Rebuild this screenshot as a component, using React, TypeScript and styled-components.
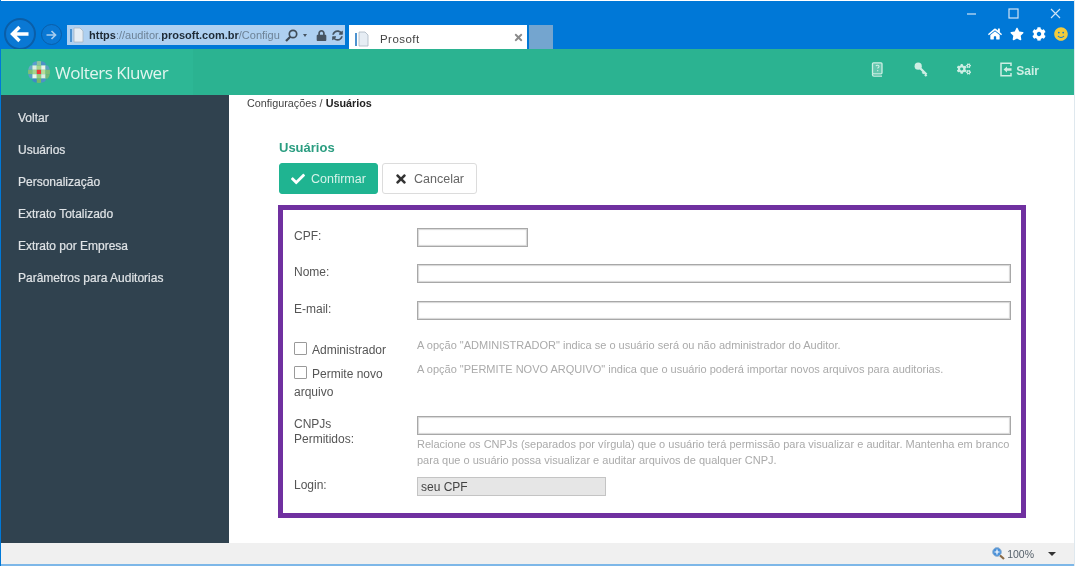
import * as React from 'react';
import styled, {createGlobalStyle} from 'styled-components';
import {
    FaCheck,
    FaCog,
    FaCogs,
    FaHome,
    FaLock,
    FaSmile,
    FaStar,
    FaSyncAlt,
    FaTimes,
} from 'react-icons/fa';

const GlobalStyle = createGlobalStyle`
    html, body {
        margin: 0;
        padding: 0;
        background: #fff;
        font-family: "Liberation Sans", Arial, sans-serif;
        overflow: hidden;
    }
`;

const Window = styled.div`
    width: 1075px;
    height: 566px;
    display: flex;
    flex-direction: column;
    box-sizing: border-box;
    padding-top: 1px;
    border-left: 1px solid #0078d7;
    border-right: 1px solid #dfe8ee;
    background: #fff;
    filter: blur(0.35px);
`;

const BrowserBar = styled.div`
    height: 48px;
    flex: none;
    background: #0078d7;
    display: flex;
    justify-content: space-between;
    padding-left: 3px;
    padding-right: 13px;
`;

const NavGroup = styled.div`
    display: flex;
    align-items: flex-start;
    padding-top: 17px;
`;

const BackButton = styled.div`
    width: 32px;
    height: 32px;
    box-sizing: border-box;
    border-radius: 50%;
    background: #0a78d4;
    border: 2px solid #0a5ea8;
    display: flex;
    align-items: center;
    justify-content: center;
`;

const ForwardButton = styled.div`
    width: 21px;
    height: 21px;
    box-sizing: border-box;
    margin: 6px 0 0 5px;
    border-radius: 50%;
    border: 1px solid #0a5ea8;
    background: #0a78d4;
    display: flex;
    align-items: center;
    justify-content: center;
`;

const AddressBar = styled.div`
    width: 278px;
    height: 20px;
    margin: 7px 0 0 5px;
    background: #aed0f1;
    box-sizing: border-box;
    display: flex;
    align-items: center;
    padding: 0 5px 0 3px;
    font-size: 11px;
    color: #6d8296;
    white-space: nowrap;
`;

const PageGlyph = styled.svg`
    width: 14px;
    height: 16px;
    flex: none;
    margin-right: 5px;
`;

const UrlText = styled.span`
    width: 191px;
    flex: none;
`;

const UrlStrong = styled.b`
    color: #1e2a35;
    font-weight: 700;
`;

const AddressIcons = styled.div`
    display: flex;
    align-items: center;
    margin-left: 5px;
    color: #465462;
    font-size: 11px;
`;

const LensIcon = styled.svg`
    width: 13px;
    height: 13px;
    fill: none;
    stroke: #3f4c58;
    stroke-width: 1.7;
`;

const TinyCaret = styled.span`
    width: 0;
    height: 0;
    margin: 0 9px 0 5px;
    border-left: 2.5px solid transparent;
    border-right: 2.5px solid transparent;
    border-top: 3px solid #465462;
`;

const ReloadWrap = styled.span`
    display: flex;
    margin-left: 5px;
`;

const Tab = styled.div`
    width: 178px;
    height: 24px;
    margin: 7px 0 0 4px;
    background: #fff;
    box-sizing: border-box;
    display: flex;
    align-items: center;
    padding: 3px 3px 0 6px;
    font-size: 11.5px;
    letter-spacing: 0.45px;
    color: #444;
`;

const TabTitle = styled.span`
    flex: 1;
    margin-left: 6px;
`;

const TabClose = styled.span`
    color: #8a8a8a;
    font-size: 11px;
    display: flex;
    margin-top: -3px;
`;

const NewTab = styled.div`
    width: 24px;
    height: 24px;
    margin: 7px 0 0 2px;
    background: #74a5cf;
`;

const RightGroup = styled.div`
    display: flex;
    flex-direction: column;
    align-items: flex-end;
`;

const WindowControls = styled.div`
    display: flex;
    align-items: center;
    gap: 31px;
    height: 24px;
`;

const ControlGlyph = styled.svg`
    width: 11px;
    height: 11px;
    stroke: #cfe3f6;
    stroke-width: 1.2;
    fill: none;
`;

const ToolIcons = styled.div`
    display: flex;
    align-items: center;
    gap: 8px;
    color: #fff;
    font-size: 14px;
    margin-right: -7px;
    margin-top: 2px;
`;

const SmileIcon = styled(FaSmile)`
    color: #f3cb3c;
`;

const AppHeader = styled.header`
    height: 46px;
    flex: none;
    background: #2bb391;
    display: flex;
    justify-content: space-between;
    align-items: center;
`;

const Brand = styled.div`
    width: 192px;
    height: 100%;
    background: #2db795;
    box-sizing: border-box;
    padding-left: 27px;
    display: flex;
    align-items: center;
    gap: 5px;
`;

const BrandName = styled.span`
    font-family: "Open Sans", sans-serif;
    font-size: 17px;
    letter-spacing: -0.5px;
    color: #e2f5ef;
`;

const HeaderNav = styled.nav`
    display: flex;
    align-items: flex-start;
    color: #cdeee4;
    padding: 0 35px 4px 0;
`;

const HeaderItem = styled.span<{$gap: number}>`
    display: flex;
    align-items: flex-start;
    gap: 4px;
    font-size: 14px;
    font-weight: 700;
    margin-left: ${p => p.$gap}px;
`;

const SairLabel = styled.span`
    font-size: 12px;
    line-height: 14px;
    margin-top: 2px;
`;

const HeaderGlyph = styled.svg<{$width: number}>`
    width: ${p => p.$width}px;
    height: 15px;
    fill: none;
    stroke: currentColor;
`;

const Body = styled.div`
    flex: 1;
    display: flex;
    min-height: 0;
`;

const Sidebar = styled.aside`
    width: 228px;
    flex: none;
    background: #30424f;
    padding-top: 7px;
    box-sizing: border-box;
`;

const SideLink = styled.div`
    height: 32px;
    line-height: 32px;
    padding-left: 17px;
    font-size: 12px;
    color: #dfe3e6;
    -webkit-text-stroke: 0.2px #dfe3e6;
`;

const Content = styled.main`
    flex: 1;
    padding: 2px 0 0 18px;
    min-width: 0;
`;

const Breadcrumb = styled.div`
    font-size: 10.8px;
    line-height: 13px;
    color: #444;
`;

const BreadcrumbCurrent = styled.b`
    color: #222;
`;

const Inner = styled.div`
    margin: 30px 0 0 31px;
    width: 748px;
`;

const Title = styled.h2`
    margin: 0 0 0 1px;
    font-size: 13px;
    line-height: 16px;
    font-weight: 700;
    color: #2a9d80;
`;

const Toolbar = styled.div`
    display: flex;
    gap: 4px;
    margin: 7px 0 0 1px;
`;

const Button = styled.button<{$primary?: boolean; $width: number}>`
    width: ${p => p.$width}px;
    height: 31px;
    box-sizing: border-box;
    border-radius: 3px;
    display: flex;
    align-items: center;
    gap: 6px;
    padding: 0 0 0 11px;
    font-family: "Liberation Sans", Arial, sans-serif;
    font-size: 12.5px;
    background: ${p => (p.$primary ? '#1fb491' : '#fff')};
    border: 1px solid ${p => (p.$primary ? '#1fb491' : '#dcdcdc')};
    color: ${p => (p.$primary ? '#d6f3ea' : '#666')};
`;

const BoldIcon = styled.span<{$primary?: boolean}>`
    display: flex;
    font-size: 14px;
    color: ${p => (p.$primary ? '#fff' : '#333')};
`;

const FormFrame = styled.form`
    margin-top: 11px;
    height: 313px;
    box-sizing: border-box;
    border: 5px solid #7030a0;
    padding: 18px 10px 0 11px;
    display: grid;
    grid-template-columns: 123px 1fr;
    grid-auto-rows: min-content;
    font-size: 12px;
    color: #555;
`;

const FieldLabel = styled.label<{$height: number}>`
    height: ${p => p.$height}px;
    line-height: 15px;
    padding-top: 1px;
    box-sizing: border-box;
`;

const FieldCell = styled.div<{$height: number}>`
    height: ${p => p.$height}px;
`;

const TextBox = styled.input<{$width?: number}>`
    display: block;
    box-sizing: border-box;
    width: ${p => (p.$width ? `${p.$width}px` : '100%')};
    height: 19px;
    padding: 0 3px;
    margin: 0;
    border: 1px solid #a8a8a8;
    box-shadow: inset 0 0 1px 1px #d6d6d6;
    background: #fff;
    font-family: "Liberation Sans", Arial, sans-serif;
    font-size: 12px;
    color: #444;

    &:disabled {
        background: #e6e6e6;
        border-color: #c4c4c4;
        box-shadow: none;
        opacity: 1;
        color: #444;
    }
`;

const CheckLabel = styled.div<{$height: number}>`
    height: ${p => p.$height}px;
    line-height: 18px;
    font-size: 12px;
    color: #555;
`;

const CheckBox = styled.span`
    display: inline-block;
    width: 11px;
    height: 11px;
    border: 1px solid #9a9a9a;
    border-radius: 1px;
    margin-right: 5px;
    vertical-align: -1px;
`;

const HelpLine = styled.div`
    margin-top: -4px;
    line-height: 16px;
    font-size: 11px;
    color: #aaa;
`;

const HelpBlock = styled.div`
    margin-top: 1px;
    font-size: 11px;
    line-height: 16px;
    color: #aaa;
`;

const StatusBar = styled.footer`
    height: 21px;
    flex: none;
    background: #f0f0f0;
    border-bottom: 2px solid #7db7e8;
    display: flex;
    justify-content: flex-end;
    align-items: center;
    gap: 14px;
    padding-right: 18px;
    font-size: 10.5px;
    color: #55606a;
`;

const Zoom = styled.span`
    display: flex;
    align-items: center;
    gap: 2px;
`;

const DownCaret = styled.span`
    width: 0;
    height: 0;
    border-left: 4px solid transparent;
    border-right: 4px solid transparent;
    border-top: 4px solid #333;
`;

const globeCells: [number, number, string][] = [
    [4, 0, '#5b9bd0'], [8, 0, '#8fc4a0'], [12, 0, '#4f90c8'],
    [0, 4, '#6aa8c8'], [4, 4, '#dfeee0'], [8, 4, '#a8d48c'], [12, 4, '#eef5ea'], [16, 4, '#5f9fc0'],
    [0, 8, '#7fbf78'], [4, 8, '#a8d48c'], [8, 8, '#ee3a3a'], [12, 8, '#b8dc98'], [16, 8, '#7fbf78'],
    [0, 12, '#5b9bc8'], [4, 12, '#eef5ea'], [8, 12, '#98cc80'], [12, 12, '#dfeee0'], [16, 12, '#78b878'],
    [4, 16, '#3f88c8'], [8, 16, '#78b868'], [12, 16, '#4f90c8'],
];

const Logo = () => (
    <svg width="22" height="22" viewBox="0 0 20 20">
        <clipPath id="globe"><circle cx="10" cy="10" r="10" /></clipPath>
        <g clipPath="url(#globe)">
            {globeCells.map(([x, y, c]) => (
                <rect key={`${x}-${y}`} x={x} y={y} width="4" height="4" fill={c} />
            ))}
        </g>
    </svg>
);

const PageIcon = () => (
    <PageGlyph viewBox="0 0 14 16">
        <rect x="0" y="2" width="2" height="13" fill="#4d93d0" />
        <path d="M4 1h6l3 3v11H4z" fill="#e6edf4" stroke="#a8b5c2" strokeWidth="0.8" />
    </PageGlyph>
);

const BackArrow = () => (
    <svg width="20" height="18" viewBox="0 0 20 18">
        <path d="M18.5 9H3M9.5 2L2.5 9l7 7" fill="none" stroke="#fff" strokeWidth="3.4" />
    </svg>
);

const ForwardArrow = () => (
    <svg width="11" height="10" viewBox="0 0 11 10">
        <path d="M0.5 5H9M5.5 1l4 4-4 4" fill="none" stroke="#a8cdee" strokeWidth="1.7" />
    </svg>
);

const Lens = () => (
    <LensIcon viewBox="0 0 13 13">
        <circle cx="8" cy="5" r="3.7" />
        <path d="M5.3 7.7L1 12" strokeWidth="2.2" />
    </LensIcon>
);

const BookGlyph = () => (
    <HeaderGlyph $width={13} viewBox="0 0 13 15" strokeWidth="1.3">
        <rect x="1.5" y="0.8" width="9.5" height="11" rx="1" fill="#cdeee4" fillOpacity="0.35" />
        <path d="M1.5 11.5v1.2c0 .8.6 1.4 1.4 1.4H11" />
        <path d="M5 4.2c.4-1.4 3-1.2 3 .3 0 1-1.3 1-1.3 2M6.7 8v1.2" strokeWidth="1.1" />
    </HeaderGlyph>
);

const KeyGlyph = () => (
    <HeaderGlyph $width={14} viewBox="0 0 14 15">
        <circle cx="4.2" cy="4.2" r="3.6" fill="currentColor" stroke="none" />
        <path d="M5.5 5.5l7 7M10 10l-1.5 1.5M12.5 12.5L11 14" strokeWidth="2.4" />
    </HeaderGlyph>
);

const ExitGlyph = () => (
    <HeaderGlyph $width={12} viewBox="0 0 12 15" strokeWidth="1.5">
        <path d="M11 4V1.2H1v12.6h10V11" />
        <path d="M3.5 7.5L7 4.5v1.7h4.5v2.6H7v1.7z" fill="currentColor" stroke="none" />
    </HeaderGlyph>
);

const ZoomGlyph = () => (
    <svg width="13" height="13" viewBox="0 0 13 13">
        <path d="M7 7.5l5 4.5" stroke="#8a6a45" strokeWidth="2.2" />
        <circle cx="5" cy="5" r="4.4" fill="#4a90d8" stroke="#9bb8d4" />
        <path d="M2.5 5h5M5 2.5v5" stroke="#fff" strokeWidth="1.2" />
    </svg>
);

const App = () => (
    <Window>
        <GlobalStyle />
        <BrowserBar>
            <NavGroup>
                <BackButton><BackArrow /></BackButton>
                <ForwardButton><ForwardArrow /></ForwardButton>
                <AddressBar>
                    <PageIcon />
                    <UrlText>
                        <UrlStrong>https</UrlStrong>://auditor.<UrlStrong>prosoft.com.br</UrlStrong>/Configu
                    </UrlText>
                    <AddressIcons>
                        <Lens />
                        <TinyCaret />
                        <FaLock />
                        <ReloadWrap><FaSyncAlt /></ReloadWrap>
                    </AddressIcons>
                </AddressBar>
                <Tab>
                    <PageIcon />
                    <TabTitle>Prosoft</TabTitle>
                    <TabClose><FaTimes /></TabClose>
                </Tab>
                <NewTab />
            </NavGroup>
            <RightGroup>
                <WindowControls>
                    <ControlGlyph viewBox="0 0 11 11"><path d="M1 6h9" /></ControlGlyph>
                    <ControlGlyph viewBox="0 0 11 11"><rect x="1" y="1" width="9" height="9" /></ControlGlyph>
                    <ControlGlyph viewBox="0 0 11 11"><path d="M1 1l9 9M10 1l-9 9" /></ControlGlyph>
                </WindowControls>
                <ToolIcons>
                    <FaHome />
                    <FaStar />
                    <FaCog />
                    <SmileIcon />
                </ToolIcons>
            </RightGroup>
        </BrowserBar>
        <AppHeader>
            <Brand>
                <Logo />
                <BrandName>Wolters Kluwer</BrandName>
            </Brand>
            <HeaderNav>
                <HeaderItem $gap={0}><BookGlyph /></HeaderItem>
                <HeaderItem $gap={30}><KeyGlyph /></HeaderItem>
                <HeaderItem $gap={29}><FaCogs /></HeaderItem>
                <HeaderItem $gap={29}><ExitGlyph /><SairLabel>Sair</SairLabel></HeaderItem>
            </HeaderNav>
        </AppHeader>
        <Body>
            <Sidebar>
                <SideLink>Voltar</SideLink>
                <SideLink>Usuários</SideLink>
                <SideLink>Personalização</SideLink>
                <SideLink>Extrato Totalizado</SideLink>
                <SideLink>Extrato por Empresa</SideLink>
                <SideLink>Parâmetros para Auditorias</SideLink>
            </Sidebar>
            <Content>
                <Breadcrumb>
                    Configurações / <BreadcrumbCurrent>Usuários</BreadcrumbCurrent>
                </Breadcrumb>
                <Inner>
                    <Title>Usuários</Title>
                    <Toolbar>
                        <Button type="button" $primary $width={99}>
                            <BoldIcon $primary><FaCheck /></BoldIcon>Confirmar
                        </Button>
                        <Button type="button" $width={95}>
                            <BoldIcon><FaTimes /></BoldIcon>Cancelar
                        </Button>
                    </Toolbar>
                    <FormFrame>
                        <FieldLabel $height={36}>CPF:</FieldLabel>
                        <FieldCell $height={36}><TextBox $width={111} /></FieldCell>
                        <FieldLabel $height={37}>Nome:</FieldLabel>
                        <FieldCell $height={37}><TextBox /></FieldCell>
                        <FieldLabel $height={40}>E-mail:</FieldLabel>
                        <FieldCell $height={40}><TextBox /></FieldCell>
                        <CheckLabel $height={24}><CheckBox />Administrador</CheckLabel>
                        <HelpLine>A opção "ADMINISTRADOR" indica se o usuário será ou não administrador do Auditor.</HelpLine>
                        <CheckLabel $height={51}><CheckBox />Permite novo<br />arquivo</CheckLabel>
                        <HelpLine>A opção "PERMITE NOVO ARQUIVO" indica que o usuário poderá importar novos arquivos para auditorias.</HelpLine>
                        <FieldLabel $height={61}>CNPJs<br />Permitidos:</FieldLabel>
                        <FieldCell $height={61}>
                            <TextBox />
                            <HelpBlock>
                                Relacione os CNPJs (separados por vírgula) que o usuário terá permissão para visualizar e auditar. Mantenha em branco para que o usuário possa visualizar e auditar arquivos de qualquer CNPJ.
                            </HelpBlock>
                        </FieldCell>
                        <FieldLabel $height={19}>Login:</FieldLabel>
                        <FieldCell $height={19}><TextBox $width={189} disabled value="seu CPF" /></FieldCell>
                    </FormFrame>
                </Inner>
            </Content>
        </Body>
        <StatusBar>
            <Zoom><ZoomGlyph />100%</Zoom>
            <DownCaret />
        </StatusBar>
    </Window>
);

export default App;
